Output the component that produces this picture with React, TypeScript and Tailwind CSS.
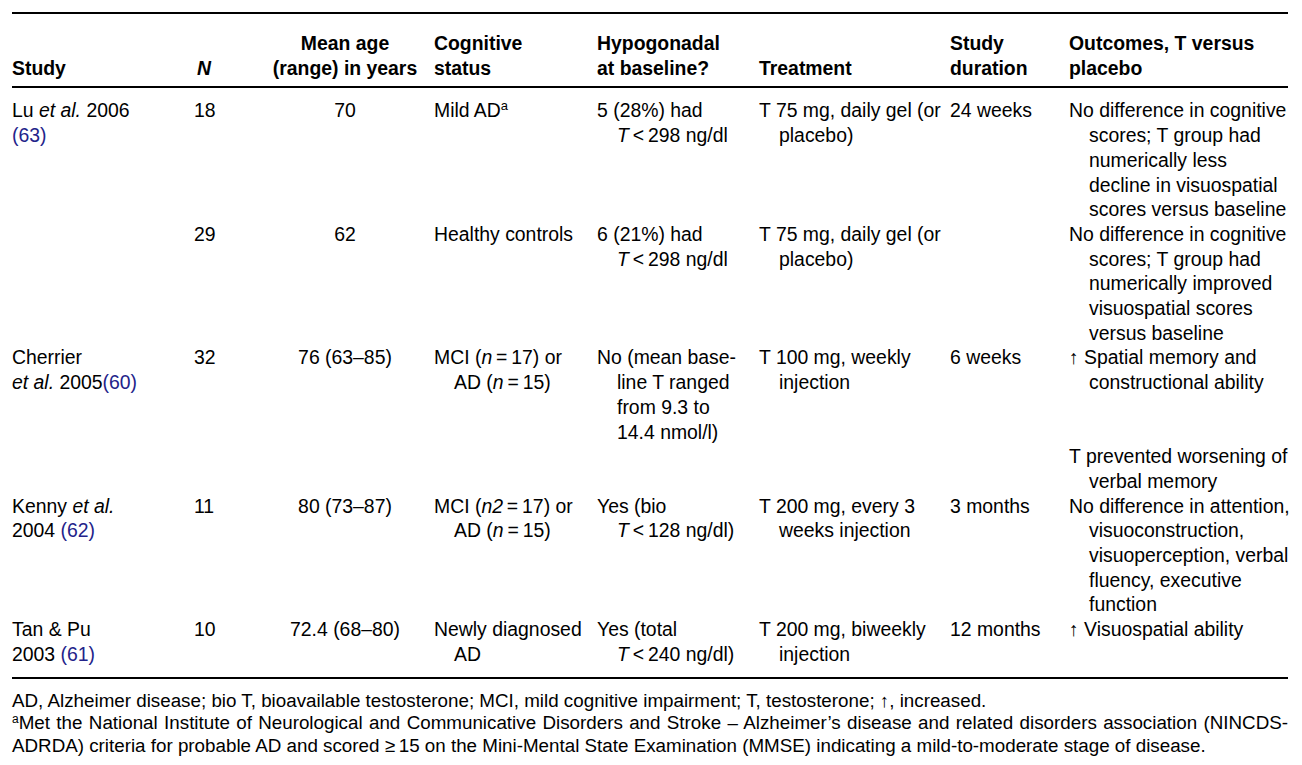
import type { ReactNode } from "react";

type Row = {
  study: ReactNode[];
  n?: string;
  age?: string;
  cognitive?: ReactNode[];
  hypo?: ReactNode[];
  treatment?: ReactNode[];
  duration?: string;
  outcome: ReactNode[];
};

const T = "\u2009";

function Ref({ children }: { children: ReactNode }) {
  return <span className="text-[#23238a]">{children}</span>;
}

function Lt({ v, unit }: { v: string; unit: string }) {
  return (
    <>
      <i>T</i>
      {T}&lt;{T}
      {v} {unit}
    </>
  );
}

const rows: Row[] = [
  {
    study: [
      <>
        Lu <i>et al.</i> 2006
      </>,
      <Ref>(63)</Ref>,
    ],
    n: "18",
    age: "70",
    cognitive: [
      <>
        Mild AD<sup className="relative -top-[7px] align-baseline text-[13px]">a</sup>
      </>,
    ],
    hypo: ["5 (28%) had", <Lt v="298" unit="ng/dl" />],
    treatment: ["T 75 mg, daily gel (or", "placebo)"],
    duration: "24 weeks",
    outcome: [
      "No difference in cognitive",
      "scores; T group had",
      "numerically less",
      "decline in visuospatial",
      "scores versus baseline",
    ],
  },
  {
    study: [],
    n: "29",
    age: "62",
    cognitive: ["Healthy controls"],
    hypo: ["6 (21%) had", <Lt v="298" unit="ng/dl" />],
    treatment: ["T 75 mg, daily gel (or", "placebo)"],
    outcome: [
      "No difference in cognitive",
      "scores; T group had",
      "numerically improved",
      "visuospatial scores",
      "versus baseline",
    ],
  },
  {
    study: [
      "Cherrier",
      <>
        <i>et al.</i> 2005<Ref>(60)</Ref>
      </>,
    ],
    n: "32",
    age: "76 (63–85)",
    cognitive: [
      <>
        MCI (<i>n</i>
        {T}={T}17) or
      </>,
      <>
        AD (<i>n</i>
        {T}={T}15)
      </>,
    ],
    hypo: ["No (mean base-", "line T ranged", "from 9.3 to", "14.4 nmol/l)"],
    treatment: ["T 100 mg, weekly", "injection"],
    duration: "6 weeks",
    outcome: ["↑ Spatial memory and", "constructional ability"],
  },
  {
    study: [],
    outcome: ["T prevented worsening of", "verbal memory"],
  },
  {
    study: [
      <>
        Kenny <i>et al.</i>
      </>,
      <>
        2004 <Ref>(62)</Ref>
      </>,
    ],
    n: "11",
    age: "80 (73–87)",
    cognitive: [
      <>
        MCI (<i>n2</i>
        {T}={T}17) or
      </>,
      <>
        AD (<i>n</i>
        {T}={T}15)
      </>,
    ],
    hypo: ["Yes (bio", <Lt v="128" unit="ng/dl)" />],
    treatment: ["T 200 mg, every 3", "weeks injection"],
    duration: "3 months",
    outcome: [
      "No difference in attention,",
      "visuoconstruction,",
      "visuoperception, verbal",
      "fluency, executive",
      "function",
    ],
  },
  {
    study: [
      "Tan & Pu",
      <>
        2003 <Ref>(61)</Ref>
      </>,
    ],
    n: "10",
    age: "72.4 (68–80)",
    cognitive: ["Newly diagnosed", "AD"],
    hypo: ["Yes (total", <Lt v="240" unit="ng/dl)" />],
    treatment: ["T 200 mg, biweekly", "injection"],
    duration: "12 months",
    outcome: ["↑ Visuospatial ability"],
  },
];

const cols = "grid grid-cols-[182px_71px_169px_163px_162px_191px_119px_219px]";

function Lines({ lines, hang = true }: { lines?: ReactNode[]; hang?: boolean }) {
  return (
    <div>
      {(lines ?? []).map((l, i) => (
        <div key={i} className={i > 0 && hang ? "whitespace-nowrap pl-[20px]" : "whitespace-nowrap"}>
          {l}
        </div>
      ))}
    </div>
  );
}

function Head({ lines, center = false }: { lines: ReactNode[]; center?: boolean }) {
  return (
    <div className={center ? "flex flex-col justify-end pr-[9px] text-center" : "flex flex-col justify-end"}>
      {lines.map((l, i) => (
        <div key={i} className="whitespace-nowrap">
          {l}
        </div>
      ))}
    </div>
  );
}

export default function App() {
  return (
    <div className="min-h-screen bg-white px-[12px] pt-[12px] font-['Liberation_Sans',Arial,sans-serif] text-black">
      <div className="w-[1276px]">
        {/* Header */}
        <div className={`${cols} border-y-2 border-black pt-[17px] pb-[6px] text-[19.4px] font-bold leading-[24.7px]`}>
          <Head lines={["Study"]} />
          <Head lines={[<i className="pl-[3px]">N</i>]} />
          <Head lines={["Mean age", "(range) in years"]} center />
          <Head lines={["Cognitive", "status"]} />
          <Head lines={["Hypogonadal", "at baseline?"]} />
          <Head lines={["Treatment"]} />
          <Head lines={["Study", "duration"]} />
          <Head lines={["Outcomes, T versus", "placebo"]} />
        </div>

        {/* Body */}
        <div className="border-b-2 border-black pt-[10px] pb-[10px] text-[19.4px] leading-[24.7px]">
          {rows.map((r, i) => (
            <div key={i} className={cols}>
              <Lines lines={r.study} hang={false} />
              <div>{r.n}</div>
              <div className="pr-[9px] text-center">{r.age}</div>
              <Lines lines={r.cognitive} />
              <Lines lines={r.hypo} />
              <Lines lines={r.treatment} />
              <div className="whitespace-nowrap">{r.duration}</div>
              <Lines lines={r.outcome} />
            </div>
          ))}
        </div>

        {/* Footnotes */}
        <div className="pt-[11px] text-[18.8px] leading-[22.5px]">
          <p className="whitespace-nowrap">
            AD, Alzheimer disease; bio T, bioavailable testosterone; MCI, mild cognitive impairment; T, testosterone;
            ↑, increased.
          </p>
          <p className="whitespace-nowrap text-justify [text-align-last:justify]">
            <sup className="relative -top-[6px] align-baseline text-[12px]">a</sup>Met the National Institute of
            Neurological and Communicative Disorders and Stroke – Alzheimer’s disease and related disorders association
            (NINCDS-
          </p>
          <p className="whitespace-nowrap">
            ADRDA) criteria for probable AD and scored {"\u2265"}
            {T}15 on the Mini-Mental State Examination (MMSE) indicating a mild-to-moderate stage of disease.
          </p>
        </div>
      </div>
    </div>
  );
}
